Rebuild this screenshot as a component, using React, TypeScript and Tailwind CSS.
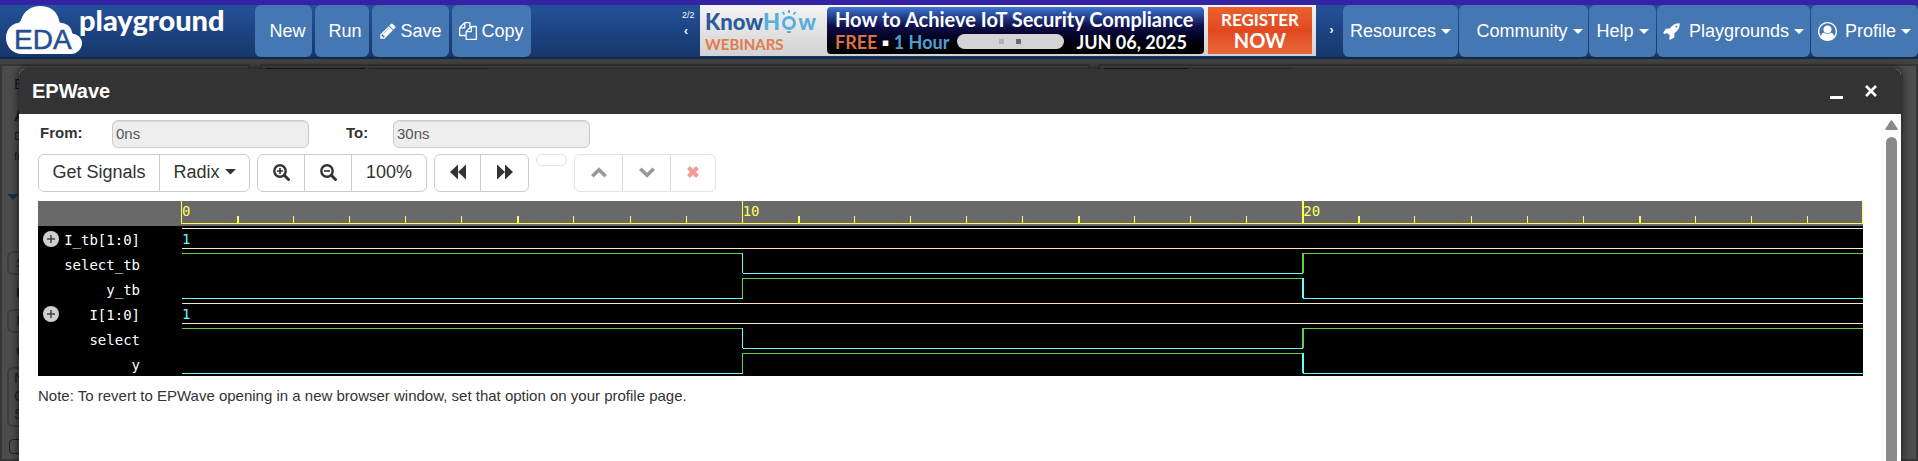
import React from "react";

const FA = {
  pencil:
    "M491 1536l91-91-235-235-91 91v107h128v128h107zm523-928q0-22-22-22-10 0-17 7l-542 542q-7 7-7 17 0 22 22 22 10 0 17-7l542-542q7-7 7-17zm-54-192l416 416-832 832h-416v-416zm683 96q0 53-37 90l-166 166-416-416 166-165q36-38 90-38 53 0 91 38l235 234q37 39 37 91z",
  copy:
    "M1696 384q40 0 68 28t28 68v1216q0 40-28 68t-68 28h-960q-40 0-68-28t-28-68v-288h-544q-40 0-68-28t-28-68v-672q0-40 20-88t48-76l408-408q28-28 76-48t88-20h416q40 0 68 28t28 68v328q68-40 128-40h416zm-544 213l-299 299h299v-299zm-640-384l-299 299h299v-299zm196 647l316-316v-416h-384v416q0 40-28 68t-68 28h-416v640h512v-256q0-40 20-88t48-76zm956 804v-1152h-384v416q0 40-28 68t-68 28h-416v640h896z",
  rocket:
    "M1440 448q0-40-28-68t-68-28-68 28-28 68 28 68 68 28 68-28 28-68zm224-288q0 249-75.5 430.5t-253.5 360.5q-81 80-195 176l-20 379q-2 16-16 26l-384 224q-7 4-16 4-12 0-23-9l-64-64q-13-14-8-32l85-276-281-281-276 85q-3 1-9 1-14 0-23-9l-64-64q-17-19-5-39l224-384q10-14 26-16l379-20q96-114 176-195 188-187 358-258t431-71q14 0 24 9.5t10 22.5z",
  user:
    "M896 0q182 0 348 71t286 191 191 286 71 348q0 181-70.5 347t-190.5 286-286 191.500-349 71.500-349-71-285.500-191.500-190.500-286-71-347.500 71-348 191-286 286-191 348-71zm619 1351q149-205 149-455 0-156-61-298t-164-245-245-164-298-61-298 61-245 164-164 245-61 298q0 250 149 455 66-327 306-327 131 128 313 128t313-128q240 0 306 327zm-235-647q0-159-112.500-271.500t-271.500-112.500-271.500 112.500-112.500 271.500 112.500 271.500 271.500 112.500 271.500-112.500 112.500-271.500z",
};

function Fa({ d, className }: { d: string; className: string }) {
  return (
    <svg viewBox="0 0 1792 1792" fill="currentColor" className={className} aria-hidden="true">
      <path d={d} />
    </svg>
  );
}

function Caret({ className = "w-[10px]" }: { className?: string }) {
  return (
    <svg viewBox="0 0 10 5" fill="currentColor" className={className} aria-hidden="true">
      <path d="M0 0h10L5 5z" />
    </svg>
  );
}

function Logo() {
  return (
    <a href="#" className="flex items-start text-white" aria-label="EDA playground">
      <svg viewBox="0 0 76 48" className="w-[76px] h-[48px] mt-px" aria-hidden="true">
        <path
          fill="#fff"
          d="M16 48C7 48 0 41 0 32c0-8 5-14 12-15 1 0 2-1 3-3C18 5 25 0 34 0c10 0 17 5 19 14 0 2 1 3 3 3 6 1 9 4 10 9 0 1 1 2 2 2 5 1 8 5 8 9 0 6-5 11-11 11z"
        />
        <text x="8" y="43" fontFamily="Liberation Sans" fontSize="28" fill="#24508f" stroke="#24508f" strokeWidth="0.5">
          EDA
        </text>
      </svg>
      <span className="font-['Lato'] font-black text-[29px] leading-[35px] -mt-[3px] -ml-[3px]">playground</span>
    </a>
  );
}

const navBtn =
  "h-[52px] rounded-md bg-[#4577b2] text-white text-[18px] flex items-center justify-center whitespace-nowrap";

function Banner() {
  return (
    <a
      href="#"
      className="flex h-[51px] w-[616px] shrink-0 gap-1 bg-gradient-to-b from-[#f4f4f4] to-[#d2d2d2] p-[2px] pl-[5px] pr-[4px] font-['Lato'] font-bold text-white"
    >
      <span className="flex w-[118px] flex-col pt-px">
        <span className="flex h-[27px] items-center text-[22px] leading-[27px] font-black text-[#2a5a9c]">
          Know<span className="text-[#5aaedd]">H</span>
          <svg viewBox="0 0 18 26" className="w-[18px] h-[26px] shrink-0" fill="none" stroke="#5aaedd" aria-hidden="true">
            <circle cx="9" cy="14" r="5.5" strokeWidth="3" />
            <path d="M7 23h4M9 1v3M2.500 3l2 2.500M15.500 3l-2 2.500" strokeWidth="2" />
          </svg>
          <span className="text-[#5aaedd]">w</span>
        </span>
        <span className="text-[15px] leading-[19px] text-[#e27a50]">WEBINARS</span>
      </span>
      <span className="flex flex-1 flex-col justify-center rounded bg-gradient-to-b from-[#3f78d6] via-[#10104e] via-40% to-black px-2">
        <span className="text-[20px] leading-[22px] whitespace-nowrap">How to Achieve IoT Security Compliance</span>
        <span className="flex items-center justify-between text-[18px] leading-[24px] whitespace-nowrap pr-[9px]">
          <span>
            <span className="text-[#dd7042]">FREE</span> ▪ <span className="text-[#4f9fd6]">1 Hour</span>
          </span>
          <span className="mr-[5px] flex h-[15px] w-[107px] items-center justify-center gap-3 rounded-full bg-[#d4d4d4]">
            <span className="size-[5px] bg-[#b0b0b0]" />
            <span className="size-[5px] bg-[#6c6c6c]" />
          </span>
          <span>JUN 06, 2025</span>
        </span>
      </span>
      <span className="flex w-[104px] flex-col items-center justify-center bg-gradient-to-b from-[#e8622f] via-[#e24820] to-[#e8683a]">
        <span className="text-[17px] leading-[20px]">REGISTER</span>
        <span className="text-[20px] leading-[21px]">NOW</span>
      </span>
    </a>
  );
}

function TopNav() {
  return (
    <nav className="flex h-[54px] shrink-0 items-start justify-between border-b-2 border-[#10284c] bg-gradient-to-b from-[#23519a] to-[#17376b]">
      <div className="flex w-[531px] shrink-0 justify-between pl-[6px]">
        <Logo />
        <div className="flex gap-[3px]">
          <button className={`${navBtn} w-[57px] pl-2`}>New</button>
          <button className={`${navBtn} w-[54px] pl-[6px]`}>Run</button>
          <button className={`${navBtn} w-[77px] gap-[3px]`}>
            <Fa d={FA.pencil} className="size-[18px]" />
            Save
          </button>
          <button className={`${navBtn} w-[79px] gap-[4px]`}>
            <Fa d={FA.copy} className="size-[18px]" />
            Copy
          </button>
        </div>
      </div>
      <div className="flex shrink-0">
        <div className="flex w-[18px] flex-col pt-[2px] text-[9px] leading-[16px] text-white">
          <span className="whitespace-nowrap">2/2</span>
          <button className="text-left pl-[2px] text-[12px] font-bold leading-[16px]">‹</button>
        </div>
        <Banner />
        <button className="h-[50px] w-[27px] pl-1 text-[12px] font-bold leading-[20px] text-white">›</button>
        <div className="flex gap-px">
          <button className={`${navBtn} w-[115px] gap-[5px]`}>
            Resources <Caret />
          </button>
          <button className={`${navBtn} w-[129px] gap-[5px] pl-3`}>
            Community <Caret />
          </button>
          <button className={`${navBtn} w-[67px] gap-[5px]`}>
            Help <Caret />
          </button>
          <button className={`${navBtn} w-[153px] gap-[5px]`}>
            <Fa d={FA.rocket} className="size-[18px] mr-[3px]" />
            Playgrounds <Caret />
          </button>
          <button className={`${navBtn} w-[107px] gap-[5px]`}>
            <Fa d={FA.user} className="size-[19px] mr-[3px]" />
            Profile <Caret />
          </button>
        </div>
      </div>
    </nav>
  );
}

function Page() {
  return (
    <div className="absolute inset-0 flex gap-[10px] overflow-hidden bg-[#424242] pt-[5px] text-[#16163a]" aria-hidden="true">
      <div className="w-[250px] shrink-0 border-2 border-[#363636] bg-[#4c4c4c]">
        <div className="pl-3 pt-2 text-[15px] leading-[20px]">
          <p>E</p>
          <p className="pt-3 font-bold">A</p>
          <p className="text-[11px]">D</p>
          <p className="text-[11px]">fr</p>
        </div>
        <div className="mt-7 pl-[5px] text-[#16304a]">
          <Caret className="w-[12px]" />
        </div>
        <div className="mt-[51px] ml-[5px] h-6 rounded-md border-2 border-[#3c3c3c] pl-[7px] text-[15px] leading-[20px] text-[#222]">S</div>
        <p className="mt-2 pl-[14px] text-[15px] font-bold leading-[20px] text-[#1c1c1c]">U</p>
        <div className="mt-[6px] ml-[5px] h-6 rounded-md border-2 border-[#3c3c3c] pl-[7px] text-[15px] leading-[20px] text-[#222]">N</div>
        <p className="mt-2 pl-[14px] text-[15px] font-bold leading-[20px] text-[#1c1c1c]">O</p>
        <div className="mt-[6px] ml-[5px] h-[60px] rounded-md border-2 border-[#3c3c3c] pl-[5px] text-[15px] leading-[18px] text-[#222]">
          <p>N</p>
          <p>O</p>
          <p>S</p>
        </div>
        <div className="mt-3 ml-[7px] size-[15px] rounded-sm border border-[#222]" />
      </div>
      <div className="flex flex-1 gap-1 border-2 border-[#363636] bg-[#4a4a4a] px-1 pt-[2px]">
        <div className="h-6 w-[99px] bg-[#16163a]" />
        <div className="h-6 w-[120px] bg-[#3a3a3a]" />
      </div>
      <div className="-ml-[2px] flex w-[820px] shrink-0 gap-1 border-2 border-[#363636] bg-[#4d4d4d] px-1 pt-[2px]">
        <div className="h-6 w-[84px] bg-[#16163a]" />
        <div className="h-6 w-[100px] bg-[#3a3a3a]" />
      </div>
    </div>
  );
}

const groupCls = "flex h-[38px] rounded-md border border-[#ccc] divide-x divide-[#ccc] text-[#333]";
const btnCls = "flex items-center justify-center pb-[2px] text-[18px] whitespace-nowrap";

function Zoom({ plus }: { plus?: boolean }) {
  return (
    <svg viewBox="0 0 17 17" className="size-[17px]" fill="none" stroke="#333" aria-hidden="true">
      <circle cx="7" cy="7" r="5.700" strokeWidth="2.400" />
      <path d="M11.500 11.500l4 4" strokeWidth="3" strokeLinecap="round" />
      <path d={plus ? "M4 7h6M7 4v6" : "M4 7h6"} strokeWidth="1.600" />
    </svg>
  );
}

function Toolbar() {
  return (
    <div className="flex items-start gap-[7px]">
      <div className={groupCls}>
        <button className={`${btnCls} w-[121px]`}>Get Signals</button>
        <button className={`${btnCls} w-[89px] gap-[5px]`}>
          Radix <Caret className="w-[11px]" />
        </button>
      </div>
      <div className={groupCls}>
        <button className={`${btnCls} w-[47px]`} aria-label="Zoom in">
          <Zoom plus />
        </button>
        <button className={`${btnCls} w-[47px]`} aria-label="Zoom out">
          <Zoom />
        </button>
        <button className={`${btnCls} w-[74px]`}>100%</button>
      </div>
      <div className={groupCls}>
        <button className={`${btnCls} w-[46px]`} aria-label="Backward">
          <svg viewBox="0 0 16 16" className="size-4" fill="currentColor" aria-hidden="true">
            <path d="M8 .5v15L0 8zM16 .5v15L8 8z" />
          </svg>
        </button>
        <button className={`${btnCls} w-[47px]`} aria-label="Forward">
          <svg viewBox="0 0 16 16" className="size-4" fill="currentColor" aria-hidden="true">
            <path d="M0 .5v15L8 8zM8 .5v15L16 8z" />
          </svg>
        </button>
      </div>
      <button className="h-3 w-[31px] rounded-md border border-[#e3e3e3]" aria-label="Value" disabled />
      <div className="flex h-[38px] divide-x divide-[#dcdcdc] rounded-md border border-[#e3e3e3] text-[#999]">
        <button className={`${btnCls} w-[48px]`} aria-label="Move up" disabled>
          <svg viewBox="0 0 16 11" className="w-4" fill="none" stroke="currentColor" strokeWidth="3.600" aria-hidden="true">
            <path d="M1.300 9.300L8 2.700l6.700 6.600" />
          </svg>
        </button>
        <button className={`${btnCls} w-[48px]`} aria-label="Move down" disabled>
          <svg viewBox="0 0 16 11" className="w-4" fill="none" stroke="currentColor" strokeWidth="3.600" aria-hidden="true">
            <path d="M1.300 1.700L8 8.300l6.700-6.600" />
          </svg>
        </button>
        <button className={`${btnCls} w-[44px]`} aria-label="Remove" disabled>
          <svg viewBox="0 0 12 12" className="w-3" fill="none" stroke="#f59a94" strokeWidth="4" aria-hidden="true">
            <path d="M1.500 1.500l9 9M10.500 1.500l-9 9" />
          </svg>
        </button>
      </div>
    </div>
  );
}

type Signal = { name: string; bus?: string; levels?: number[] };

const signals: Signal[] = [
  { name: "I_tb[1:0]", bus: "1" },
  { name: "select_tb", levels: [1, 0, 1] },
  { name: "y_tb", levels: [0, 1, 0] },
  { name: "I[1:0]", bus: "1" },
  { name: "select", levels: [1, 0, 1] },
  { name: "y", levels: [0, 1, 0] },
];

const GREEN = "#66cc4c";
const CYAN = "#66ffff";
const BUS = "#ffe4c4";
const pct = (t: number) => `${(t / 30) * 100}%`;
const yOf = (v: number) => (v ? 2 : 22);

function Trace({ signal }: { signal: Signal }) {
  if (signal.bus) {
    return (
      <svg className="block h-[25px] w-full" shapeRendering="crispEdges">
        <rect x="1" y="2" width="100%" height="1" fill={BUS} />
        <rect x="1" y="22" width="100%" height="1" fill={BUS} />
        <text x="1" y="18" fontSize="14" fontFamily="DejaVu Sans Mono" fill={CYAN}>
          {signal.bus}
        </text>
      </svg>
    );
  }
  const levels = signal.levels ?? [];
  return (
    <svg className="block h-[25px] w-full" shapeRendering="crispEdges">
      <svg x="1" overflow="visible">
        {levels.map((v, i) => (
          <rect key={i} x={pct(i * 10)} y={yOf(v)} width={pct(10)} height="1" fill={v ? GREEN : CYAN} />
        ))}
      </svg>
      {levels.map(
        (v, i) => i > 0 && <rect key={i} x={pct(i * 10)} y="2" width={i} height="20" fill={v ? GREEN : CYAN} />
      )}
    </svg>
  );
}

function Waveform() {
  return (
    <div className="bg-black font-['DejaVu_Sans_Mono',monospace] text-[14px] text-white">
      <div className="flex h-[25px] bg-[#696969]">
        <div className="w-[143px] shrink-0" />
        <svg className="block h-[25px] min-w-0 flex-1" shapeRendering="crispEdges">
          <rect x="0" y="22" width="100%" height="1" fill="#ffff55" />
          {Array.from({ length: 30 }, (_, t) => (
            <rect
              key={t}
              x={pct(t)}
              y={t % 10 ? 15 : 0}
              width={t === 20 || t % 5 === 1 ? 2 : 1}
              height={t % 10 ? 7 : 22}
              fill="#ffff55"
            />
          ))}
          <svg x="100%" overflow="visible">
            <rect x="-1" y="0" width="1" height="23" fill="#ffff55" />
          </svg>
          {[0, 10, 20].map((t) => (
            <svg key={t} x={pct(t)} overflow="visible">
              <text x="1" y="15" fontSize="14" fill="#ffff55">
                {t}
              </text>
            </svg>
          ))}
        </svg>
      </div>
      {signals.map((s) => (
        <div key={s.name} className="flex h-[25px]">
          <div className="flex w-[143px] shrink-0 items-center pl-[5px] pr-[41px] leading-[25px]">
            {s.bus && (
              <button className="rounded-full" aria-label={`Expand ${s.name}`}>
                <svg viewBox="0 0 16 16" className="size-4" aria-hidden="true">
                  <circle cx="8" cy="8" r="8" fill="#cfcfcf" />
                  <path d="M4 8h8M8 4v8" stroke="#444" strokeWidth="1.500" />
                </svg>
              </button>
            )}
            <span className="ml-auto pt-1">{s.name}</span>
          </div>
          <div className="min-w-0 flex-1">
            <Trace signal={s} />
          </div>
        </div>
      ))}
    </div>
  );
}

function Field({ id, label, value, className }: { id: string; label: string; value: string; className: string }) {
  return (
    <div className="flex">
      <label htmlFor={id} className={`${className} pt-px text-[15px] font-bold leading-[24px] text-[#333]`}>
        {label}
      </label>
      <input
        id={id}
        defaultValue={value}
        readOnly
        className="h-7 w-[197px] rounded-md border border-[#ccc] bg-[#eee] px-[3px] pb-[2px] text-[15px] text-[#555] shadow-[inset_0_1px_1px_rgba(0,0,0,0.08)]"
      />
    </div>
  );
}

function Modal() {
  return (
    <div className="relative mr-[17px] ml-[19px] mt-[10px] flex flex-1 flex-col rounded-t-md bg-white shadow-[0_0_8px_rgba(0,0,0,0.8)]">
      <header className="flex h-[45px] shrink-0 items-center rounded-t-md bg-[#333] pb-[2px] pl-[13px] pr-[24px] text-white">
        <h1 className="flex-1 text-[20px] font-bold leading-[24px]">EPWave</h1>
        <button className="flex h-4 w-[13px] items-end" aria-label="Minimize">
          <span className="h-[3px] w-full bg-white" />
        </button>
        <button className="ml-[22px]" aria-label="Close">
          <svg viewBox="0 0 12 12" className="size-3" fill="none" stroke="#fff" strokeWidth="2.600" aria-hidden="true">
            <path d="M1 1l10 10M11 1L1 11" />
          </svg>
        </button>
      </header>
      <div className="flex flex-1">
        <main className="min-w-0 flex-1 pl-[19px] pr-[18px] pt-[6px]">
          <div className="mb-[6px] flex gap-[37px] pl-[2px]">
            <Field id="from" label="From:" value="0ns" className="w-[72px]" />
            <Field id="to" label="To:" value="30ns" className="w-[47px]" />
          </div>
          <Toolbar />
          <div className="mt-[9px]">
            <Waveform />
          </div>
          <p className="mt-[10px] text-[15px] leading-[20px] text-[#333]">
            Note: To revert to EPWave opening in a new browser window, set that option on your profile page.
          </p>
        </main>
        <div className="flex w-[20px] flex-col items-center bg-[#fcfcfc] pt-[6px]" aria-hidden="true">
          <svg viewBox="0 0 13 10" className="w-[13px]" fill="#8a8a8a">
            <path d="M5.500 1q1-1.500 2 0l5 7.500q.5 1.500-1 1.500H1.500q-1.500 0-1-1.500z" />
          </svg>
          <div className="mt-[7px] w-[11px] flex-1 rounded-t-full bg-[#8a8a8a]" />
        </div>
      </div>
    </div>
  );
}

export default function App() {
  return (
    <div className="flex h-screen flex-col overflow-hidden bg-[#424242] font-['Liberation_Sans',Arial,sans-serif]">
      <div className="h-[5px] shrink-0 bg-[#3423a4]" />
      <TopNav />
      <div className="relative flex flex-1">
        <Page />
        <Modal />
      </div>
    </div>
  );
}
